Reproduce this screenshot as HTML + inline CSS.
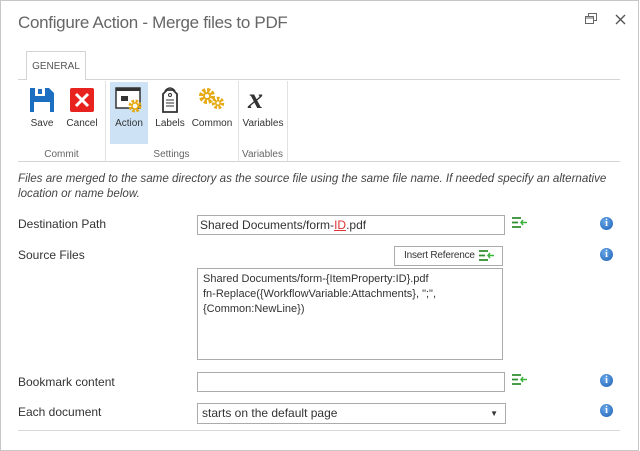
<!DOCTYPE html>
<html><head><meta charset="utf-8"><style>
*{margin:0;padding:0;box-sizing:border-box}
body{width:640px;height:451px;background:#fff;font-family:"Liberation Sans",sans-serif;color:#444;position:relative;overflow:hidden;font-size:12px}
.frame{position:absolute;left:0;top:0;width:639px;height:451px;border:1px solid #c6c6c6}
.a{position:absolute}
.title{left:18px;top:13px;font-size:17px;color:#666;letter-spacing:-0.3px}
.tab{left:26px;top:51px;width:60px;height:29px;border:1px solid #d4d4d4;border-bottom:none;background:#fff;font-size:10px;color:#555;text-align:center;line-height:30px}
.ribbon{left:18px;top:79px;width:602px;height:83px;border-top:1px solid #d4d4d4;border-bottom:1px solid #d4d4d4}
.sep{top:81px;width:1px;height:80px;background:#e2e2e2}
.lbl{font-size:10px;color:#333;text-align:center}
.grp{font-size:10px;color:#666;text-align:center;top:149px}
.desc{left:18px;top:171px;font-style:italic;font-size:11.6px;line-height:15px;color:#444;width:600px}
.fl{left:18px;font-size:12px;color:#333}
.inp{border:1px solid #ababab;background:#fff;font-size:12px;color:#333;padding-left:2px}
.info{width:13px;height:13px;border-radius:50%;background:radial-gradient(circle at 40% 35%,#6aa8e8,#1a5fb4);color:#fff;font-size:10px;font-weight:bold;text-align:center;line-height:13px;font-family:"Liberation Serif",serif}
</style></head><body>
<div class="frame"></div>
<div class="a title">Configure Action - Merge files to PDF</div>
<svg class="a" style="left:585px;top:13px" width="13" height="12"><rect x="3.5" y="0.5" width="8" height="7" fill="none" stroke="#666"/><rect x="0.5" y="3.5" width="8" height="7" fill="#fff" stroke="#666"/><line x1="0.5" y1="5" x2="8.5" y2="5" stroke="#666"/></svg>
<svg class="a" style="left:615px;top:14px" width="11" height="11"><path d="M1 1L10 10M10 1L1 10" stroke="#555" stroke-width="1.4"/></svg>
<div class="a ribbon"></div>
<div class="a tab">GENERAL</div>
<div class="a sep" style="left:105px"></div>
<div class="a sep" style="left:238px"></div>
<div class="a sep" style="left:287px"></div>
<div class="a" style="left:110px;top:82px;width:38px;height:62px;background:#cde3f5"></div>
<svg class="a" style="left:30px;top:88px" width="24" height="24"><path d="M0 0H5V8H15V0H19L24 5V24H0Z" fill="#1c6fc0"/><rect x="8" y="1" width="4" height="5" fill="#1c6fc0"/><rect x="4" y="14" width="16" height="10" fill="#fff"/></svg>
<div class="a lbl" style="left:26px;top:118px;width:32px">Save</div>
<svg class="a" style="left:70px;top:88px" width="24" height="24"><rect width="24" height="24" rx="2" fill="#e8231f"/><path d="M6 6L18 18M18 6L6 18" stroke="#fff" stroke-width="3"/></svg>
<div class="a lbl" style="left:64px;top:118px;width:36px">Cancel</div>
<svg class="a" style="left:115px;top:87px" width="28" height="27"><rect x="1" y="1" width="24" height="20" fill="#fff" stroke="#333" stroke-width="1.5"/><rect x="1" y="1" width="24" height="3" fill="#333"/><rect x="6" y="9" width="7" height="5" fill="#333"/><circle cx="20" cy="19" r="5" fill="none" stroke="#e5a913" stroke-width="3" stroke-dasharray="2.5 1.5"/><circle cx="20" cy="19" r="3" fill="#fff" stroke="#e5a913" stroke-width="1.5"/></svg>
<div class="a lbl" style="left:110px;top:118px;width:38px">Action</div>
<svg class="a" style="left:160px;top:86px" width="20" height="28"><path d="M5 5Q10 -1 15 5" fill="none" stroke="#333" stroke-width="1.5"/><path d="M3 8L7 4H13L17 8V26H3Z" fill="#fff" stroke="#333" stroke-width="1.8"/><circle cx="10" cy="9" r="1.5" fill="none" stroke="#333"/><path d="M6 14H14M6 17H14M6 20H14" stroke="#333"/></svg>
<div class="a lbl" style="left:152px;top:118px;width:36px">Labels</div>
<svg class="a" style="left:198px;top:87px" width="28" height="24"><circle cx="9" cy="9" r="6" fill="none" stroke="#e5a913" stroke-width="4" stroke-dasharray="3 1.7"/><circle cx="9" cy="9" r="3" fill="none" stroke="#e5a913" stroke-width="2"/><circle cx="20" cy="16" r="4.5" fill="none" stroke="#e5a913" stroke-width="3.5" stroke-dasharray="2.5 1.5"/><circle cx="20" cy="16" r="2.2" fill="none" stroke="#e5a913" stroke-width="1.5"/></svg>
<div class="a lbl" style="left:190px;top:118px;width:44px">Common</div>
<div class="a" style="left:248px;top:82px;font-family:'Liberation Serif',serif;font-style:italic;font-weight:bold;font-size:30px;color:#333">x</div>
<div class="a lbl" style="left:240px;top:118px;width:46px">Variables</div>
<div class="a grp" style="left:18px;width:87px">Commit</div>
<div class="a grp" style="left:105px;width:133px">Settings</div>
<div class="a grp" style="left:238px;width:49px">Variables</div>
<div class="a desc">Files are merged to the same directory as the source file using the same file name. If needed specify an alternative location or name below.</div>
<div class="a fl" style="top:217px">Destination Path</div>
<div class="a inp" style="left:197px;top:215px;width:308px;height:20px;line-height:18px">Shared Documents/form-<span style="color:#d33;text-decoration:underline">ID</span>.pdf</div>
<div class="a fl" style="top:248px">Source Files</div>
<div class="a inp" style="left:394px;top:246px;width:109px;height:20px;line-height:18px;font-size:10px;padding-left:9px;letter-spacing:-0.2px">Insert Reference</div>
<div class="a inp" style="left:197px;top:268px;width:306px;height:92px;padding:3px 5px;font-size:11px;line-height:15px">Shared Documents/form-{ItemProperty:ID}.pdf<br>fn-Replace({WorkflowVariable:Attachments}, ";",<br>{Common:NewLine})</div>
<div class="a fl" style="top:375px">Bookmark content</div>
<div class="a inp" style="left:197px;top:372px;width:308px;height:20px"></div>
<div class="a fl" style="top:405px">Each document</div>
<div class="a inp" style="left:197px;top:403px;width:309px;height:21px;line-height:19px;padding-left:4px">starts on the default page<span style="position:absolute;right:7px;font-size:8px">▼</span></div>
<div class="a" style="left:18px;top:430px;width:602px;height:1px;background:#d8d8d8"></div>
<svg class="a" style="left:512px;top:217px" width="16" height="12"><path d="M0 1H9M0 5.5H6M0 10H9" stroke="#2f8f2f" stroke-width="1.8"/><path d="M9 5.5H15M11 3L9 5.5L11 8" stroke="#3cb33c" stroke-width="1.5" fill="none"/></svg>
<svg class="a" style="left:479px;top:250px" width="16" height="12"><path d="M0 1H9M0 5.5H6M0 10H9" stroke="#2f8f2f" stroke-width="1.8"/><path d="M9 5.5H15M11 3L9 5.5L11 8" stroke="#3cb33c" stroke-width="1.5" fill="none"/></svg>
<svg class="a" style="left:512px;top:374px" width="16" height="12"><path d="M0 1H9M0 5.5H6M0 10H9" stroke="#2f8f2f" stroke-width="1.8"/><path d="M9 5.5H15M11 3L9 5.5L11 8" stroke="#3cb33c" stroke-width="1.5" fill="none"/></svg>
<div class="a info" style="left:600px;top:217px">i</div>
<div class="a info" style="left:600px;top:248px">i</div>
<div class="a info" style="left:600px;top:374px">i</div>
<div class="a info" style="left:600px;top:404px">i</div>
</body></html>
